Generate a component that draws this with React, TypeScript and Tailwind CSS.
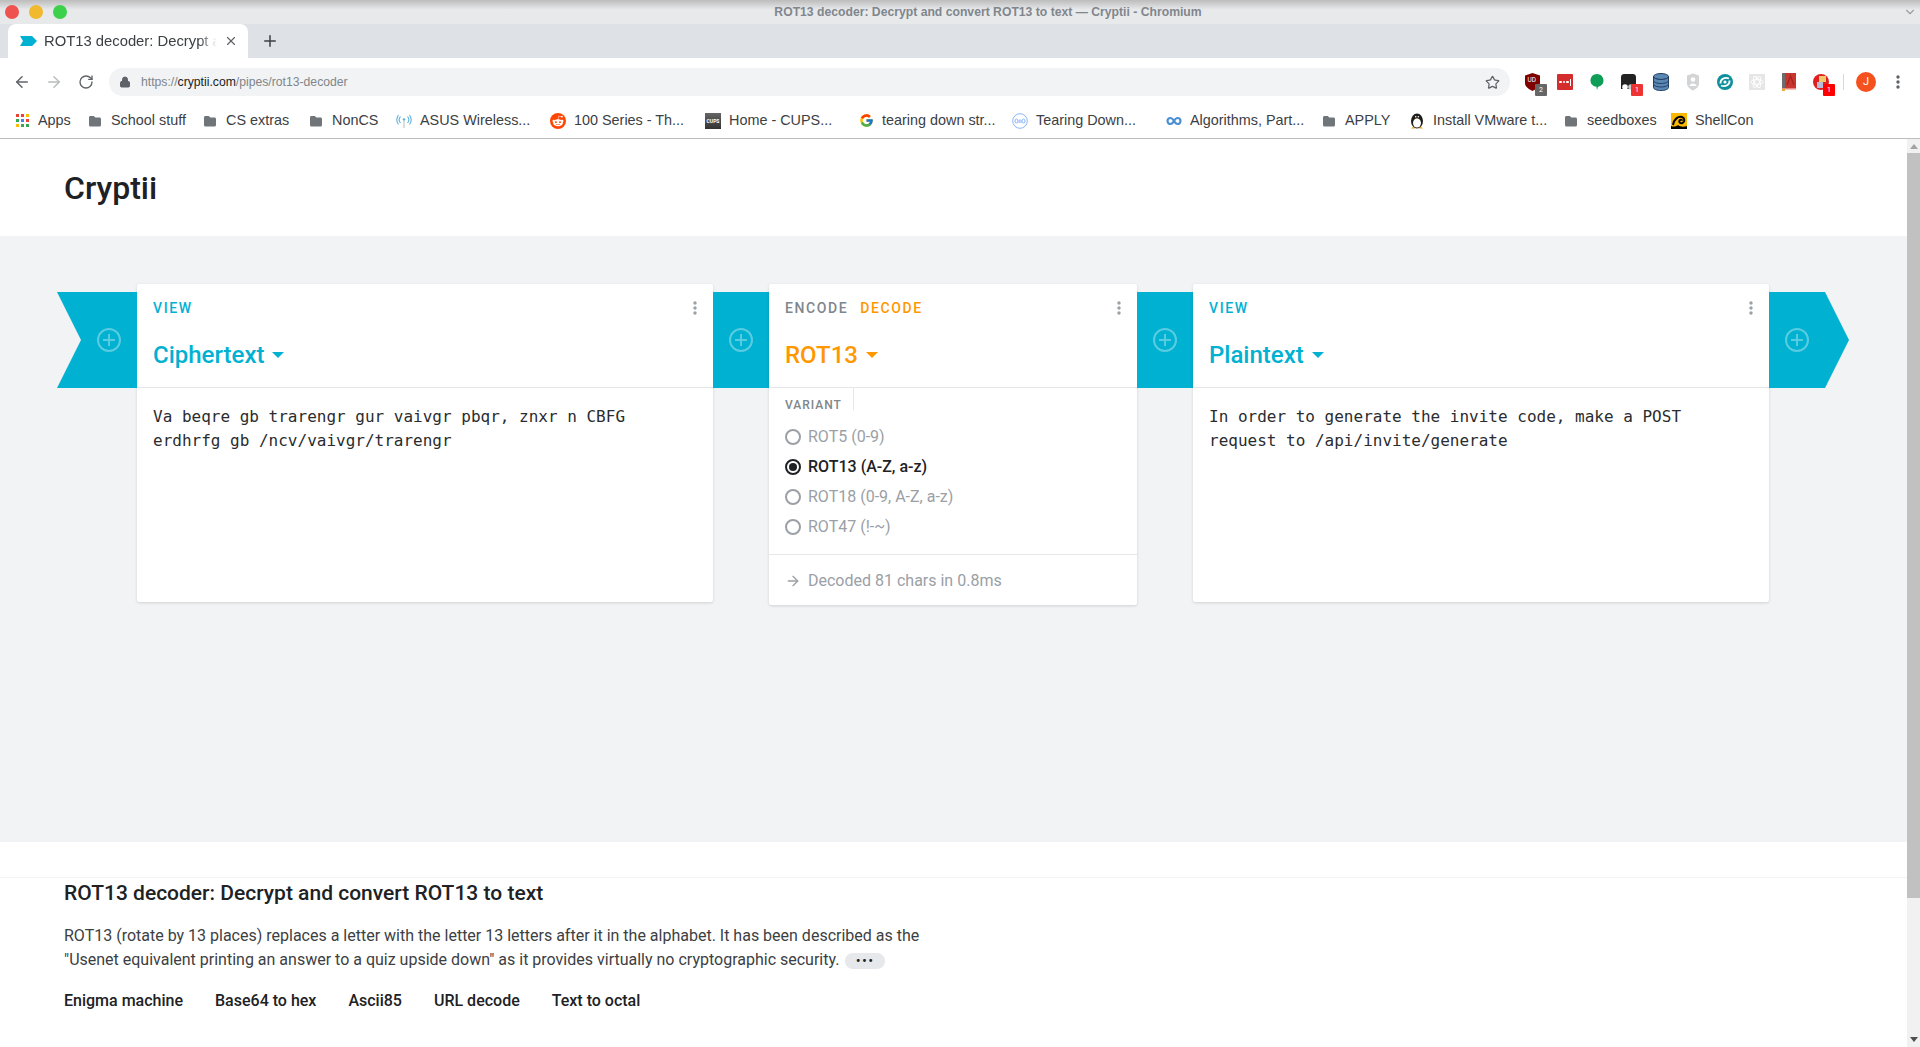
import { ArrowLeft, ArrowRight, RotateCw, Lock, Star, Plus, X, ChevronDown } from "lucide-react";
import { FcGoogle } from "react-icons/fc";
import { FaRedditAlien } from "react-icons/fa";

const roboto = "font-['Roboto',sans-serif]";
const arial = "font-['Liberation_Sans',sans-serif]";

function FolderIcon() {
  return (
    <svg width="16" height="16" viewBox="0 0 16 16" className="shrink-0">
      <path d="M2 4.5C2 3.7 2.6 3 3.4 3h3.4L8.300 4.500h4.300c.8 0 1.400.7 1.400 1.500v6c0 .8-.6 1.500-1.400 1.500H3.400C2.600 13.500 2 12.800 2 12z" fill="#70757a" />
    </svg>
  );
}

function AppsIcon() {
  const colors = ["#ea4335", "#ea4335", "#fbbc04", "#34a853", "#4285f4", "#ea4335", "#fbbc04", "#34a853", "#34a853"];
  return (
    <div className="grid grid-cols-3 gap-[2px] w-[13px] shrink-0">
      {colors.map((c, i) => (
        <div key={i} className="w-[3px] h-[3px]" style={{ background: c }} />
      ))}
    </div>
  );
}

function WifiIcon() {
  return (
    <svg width="16" height="16" viewBox="0 0 16 16" fill="none" stroke="#5fb2df" strokeWidth="1.100">
      <path d="M4.500 3.500a5 5 0 0 0 0 6.500M11.500 3.500a5 5 0 0 1 0 6.500M2.500 2a8 8 0 0 0 0 9.500M13.500 2a8 8 0 0 1 0 9.500" />
      <circle cx="8" cy="6.500" r="1.300" fill="#5fb2df" stroke="none" />
      <path d="M8 7.500V15" stroke="#b9c4cc" />
    </svg>
  );
}

function OnoIcon() {
  return (
    <svg width="16" height="16" viewBox="0 0 16 16" fill="none" stroke="#8ab4f8" strokeWidth="1">
      <circle cx="8" cy="8" r="7.300" />
      <ellipse cx="4.500" cy="8" rx="1.500" ry="2" />
      <path d="M7.200 10V7.500c0-.9 1.800-.9 1.800 0V10" />
      <ellipse cx="11.500" cy="8" rx="1.500" ry="2" />
    </svg>
  );
}

function InfinityIcon() {
  return (
    <svg width="16" height="16" viewBox="0 0 16 16" fill="none" stroke="#4a8fd4" strokeWidth="2.200">
      <path d="M8 8c-1-1.800-2-3-3.700-3C2.900 5 1.500 6.300 1.500 8s1.400 3 2.800 3C6 11 7 9.800 8 8s2-3 3.700-3c1.400 0 2.800 1.300 2.800 3s-1.400 3-2.800 3C10 11 9 9.800 8 8z" />
    </svg>
  );
}

function PenguinIcon() {
  return (
    <svg width="16" height="16" viewBox="0 0 16 16">
      <ellipse cx="8" cy="8" rx="6" ry="7.500" fill="#1c1c1c" />
      <ellipse cx="8" cy="10" rx="4" ry="4.500" fill="#ffffff" />
      <circle cx="6.700" cy="3.800" r=".8" fill="#ffffff" />
      <circle cx="9.300" cy="3.800" r=".8" fill="#ffffff" />
      <path d="M6.800 5h2.400L8 6.300z" fill="#e8a320" />
      <path d="M2 15.500l2.500-2 1.500 2zM14 15.500l-2.500-2-1.500 2z" fill="#e8a320" />
    </svg>
  );
}

function ShellIcon() {
  return (
    <svg width="16" height="16" viewBox="0 0 16 16">
      <rect width="16" height="16" fill="#fbb800" />
      <path d="M0 16v-3c3 1 5 .5 7-1 2 2 6 2 9 1v3z" fill="#000000" />
      <path d="M2 12C3 6 7 3 11 4c3 1 3 5 .5 6-2 .8-4-.5-3-2.500 .7-1.200 2.500-1 2.500.2" fill="none" stroke="#000000" strokeWidth="2" />
    </svg>
  );
}

function Bookmark({ icon, label, width }: { icon: React.ReactNode; label: string; width: string }) {
  return (
    <div className={`flex items-center gap-[8px] shrink-0 ${width}`}>
      <div className="w-[16px] h-[16px] flex items-center justify-center shrink-0">{icon}</div>
      <span className={`text-[14.400px] text-[#3c4043] whitespace-nowrap ${arial}`}>{label}</span>
    </div>
  );
}

function Badge({ text, color }: { text: string; color: string }) {
  return (
    <span className={`absolute -right-[6px] -bottom-[5px] w-[12px] h-[12px] rounded-[1px] text-white text-[7px] leading-[12px] text-center ${color}`}>
      {text}
    </span>
  );
}

function Extensions() {
  return (
    <div className="flex items-center gap-[16px]">
      <div className="relative w-[16px] h-[18px]">
        <svg width="15" height="18" viewBox="0 0 15 18">
          <path d="M0 2.500L7.500 0 15 2.500V10c0 4-4 6-7.500 8C4 16 0 14 0 10z" fill="#800000" />
          <text x="2.500" y="9" fontSize="6.500" fill="#ffffff" fontFamily="Roboto, sans-serif">UD</text>
        </svg>
        <Badge text="2" color="bg-[#666666]" />
      </div>
      <div className="w-[16px] h-[16px] bg-[#d32d2d] rounded-[1px] flex items-center justify-center gap-[1px]">
        <span className="w-[2.500px] h-[2.500px] bg-white rounded-full" />
        <span className="w-[2.500px] h-[2.500px] bg-white rounded-full" />
        <span className="w-[2.500px] h-[2.500px] bg-white rounded-full" />
        <span className="w-[1px] h-[7px] bg-white" />
      </div>
      <svg width="16" height="18" viewBox="0 0 16 18">
        <path d="M8 1c3.600 0 6.500 2.800 6.500 6.500 0 3.500-2.500 5.800-5.500 6.300L8 17l-.5-3.200C4 13.500 1.500 11 1.500 7.500 1.500 3.800 4.400 1 8 1z" fill="#0f9d58" />
      </svg>
      <div className="relative w-[16px] h-[18px]">
        <svg width="15" height="18" viewBox="0 0 15 18">
          <path d="M0 4c0-2 1.500-3 3-3h9c1.500 0 3 1 3 3v12H0z" fill="#222222" />
          <circle cx="4" cy="14" r="2.800" fill="#ffffff" />
          <circle cx="10" cy="14" r="2.800" fill="#cccccc" />
        </svg>
        <Badge text="1" color="bg-[#ee3333]" />
      </div>
      <svg width="16" height="18" viewBox="0 0 16 18">
        <ellipse cx="8" cy="3.500" rx="7.500" ry="3" fill="#5b87b5" stroke="#233f63" />
        <path d="M.5 3.500v11c0 1.700 3.400 3 7.500 3s7.500-1.300 7.500-3v-11c0 1.700-3.400 3-7.500 3s-7.500-1.300-7.500-3z" fill="#5b87b5" stroke="#233f63" />
        <path d="M.5 7.500c0 1.700 3.400 3 7.500 3s7.500-1.300 7.500-3M.5 11c0 1.700 3.400 3 7.500 3s7.500-1.300 7.500-3" fill="none" stroke="#233f63" />
      </svg>
      <svg width="16" height="18" viewBox="0 0 16 18">
        <path d="M2 2.500L8 .5l6 2V10c0 4-3 6-6 7.500C5 16 2 14 2 10z" fill="#d2d4d6" />
        <circle cx="8" cy="6.500" r="2.300" fill="#ffffff" />
        <path d="M4.500 13c0-3.500 7-3.500 7 0z" fill="#ffffff" />
      </svg>
      <svg width="16" height="16" viewBox="0 0 16 16">
        <circle cx="8" cy="8" r="8" fill="#0e8f9c" />
        <path d="M3.500 9.500C3 5.500 7.500 2.500 12 4.500M12.500 6.500c.5 4-4 7-8.500 5" stroke="#ffffff" strokeWidth="1.800" fill="none" />
        <circle cx="8" cy="8" r="1.600" fill="#ffffff" />
      </svg>
      <svg width="16" height="16" viewBox="0 0 16 16" fill="none" stroke="#ffffff" strokeWidth=".9">
        <rect width="16" height="16" fill="#e6e6e6" stroke="none" />
        <ellipse cx="8" cy="8" rx="6" ry="2.500" />
        <ellipse cx="8" cy="8" rx="6" ry="2.500" transform="rotate(60 8 8)" />
        <ellipse cx="8" cy="8" rx="6" ry="2.500" transform="rotate(120 8 8)" />
      </svg>
      <svg width="16" height="18" viewBox="0 0 16 18">
        <rect x="1" y="0" width="14" height="15" fill="#c9352f" />
        <rect x="1" y="0" width="3" height="16" fill="#6d6d6d" />
        <path d="M6 12l3.500-9L13 12" fill="none" stroke="#a02620" strokeWidth="1.300" />
        <rect x="1" y="15" width="14" height="1.500" fill="#e88a80" />
        <rect x="1" y="16" width="3" height="2" fill="#e0b030" />
      </svg>
      <div className="relative w-[16px] h-[18px]">
        <svg width="16" height="18" viewBox="0 0 16 18">
          <circle cx="8" cy="9" r="8" fill="#e02020" />
          <rect x="6" y="3" width="7" height="6" fill="#f0c96a" />
          <rect x="4" y="9" width="6" height="6" fill="#b9bcd6" />
        </svg>
        <Badge text="1" color="bg-[#ff0000]" />
      </div>
    </div>
  );
}

function ChromeBar() {
  return (
    <div className={`w-full ${roboto}`}>
      <div className="h-[24px] bg-gradient-to-b from-[#bcbcbc] to-[#e8e9eb] to-[40%] flex items-center relative">
        <div className="flex items-center gap-[10px] pl-[5px]">
          <span className="w-[14px] h-[14px] rounded-full bg-[#ef5350]" />
          <span className="w-[14px] h-[14px] rounded-full bg-[#f0b92e]" />
          <span className="w-[14px] h-[14px] rounded-full bg-[#3bd14a]" />
        </div>
        <div className={`flex-1 text-center text-[12.200px] font-bold text-[#80868b] pl-[6px] ${arial}`}>
          ROT13 decoder: Decrypt and convert ROT13 to text — Cryptii - Chromium
        </div>
        <ChevronDown size={14} className="text-[#9aa0a6] mr-[3px]" />
      </div>
      <div className="h-[34px] bg-[#dee1e6] flex items-end pl-[8px]">
        <div className="w-[240px] h-[34px] bg-white rounded-t-[8px] flex items-center pl-[12px] pr-[10px] gap-[7px]">
          <svg width="17" height="10" viewBox="0 0 17 10" className="shrink-0"><path d="M0 0h12l5 5-5 5H0l3-5z" fill="#00b1d2" /></svg>
          <span className={`flex-1 overflow-hidden whitespace-nowrap text-[14.800px] text-[#3c4043] [mask-image:linear-gradient(to_right,black_90%,transparent)] ${arial}`}>
            ROT13 decoder: Decrypt a
          </span>
          <X size={14} className="text-[#5f6368] shrink-0" />
        </div>
        <Plus size={18} strokeWidth={2} className="text-[#3c4043] ml-[13px] mb-[8px]" />
      </div>
      <div className="h-[48px] bg-white flex items-center pl-[13px]">
        <ArrowLeft size={18} className="text-[#5f6368]" />
        <ArrowRight size={18} className="text-[#babcbe] ml-[14px]" />
        <RotateCw size={16} className="text-[#5f6368] ml-[15px]" />
        <div className="ml-[15px] w-[1401px] h-[28px] bg-[#f1f3f4] rounded-full flex items-center pl-[10px] pr-[10px]">
          <Lock size={12} className="text-[#5f6368]" fill="#5f6368" />
          <span className={`ml-[10px] text-[12.200px] text-[#80868b] flex-1 whitespace-nowrap ${arial}`}>
            https://<span className="text-[#202124]">cryptii.com</span>/pipes/rot13-decoder
          </span>
          <Star size={15} className="text-[#5f6368]" />
        </div>
        <div className="ml-[15px]"><Extensions /></div>
        <div className="w-px h-[16px] bg-[#d5d7da] ml-[14px]" />
        <div className="ml-[12px] w-[20px] h-[20px] rounded-full bg-[#f4511e] text-white text-[11px] flex items-center justify-center">J</div>
        <div className="ml-[20px]"><Dots color="#5f6368" /></div>
      </div>
      <div className="h-[33px] bg-white border-b border-[#bdbdbd] flex items-center pl-[14px] pb-[2px]">
        <Bookmark width="w-[73px]" icon={<AppsIcon />} label="Apps" />
        <Bookmark width="w-[115px]" icon={<FolderIcon />} label="School stuff" />
        <Bookmark width="w-[106px]" icon={<FolderIcon />} label="CS extras" />
        <Bookmark width="w-[88px]" icon={<FolderIcon />} label="NonCS" />
        <Bookmark width="w-[154px]" icon={<WifiIcon />} label="ASUS Wireless..." />
        <Bookmark width="w-[155px]" icon={<span className="w-[16px] h-[16px] rounded-full bg-[#ff4500] flex items-center justify-center"><FaRedditAlien size={12} color="#ffffff" /></span>} label="100 Series - Th..." />
        <Bookmark width="w-[153px]" icon={<span className="w-[16px] h-[16px] bg-gradient-to-b from-[#666666] to-[#333333] text-white text-[5px] font-bold text-center leading-[16px]">CUPS</span>} label="Home - CUPS..." />
        <Bookmark width="w-[154px]" icon={<FcGoogle size={15} />} label="tearing down str..." />
        <Bookmark width="w-[154px]" icon={<OnoIcon />} label="Tearing Down..." />
        <Bookmark width="w-[155px]" icon={<InfinityIcon />} label="Algorithms, Part..." />
        <Bookmark width="w-[88px]" icon={<FolderIcon />} label="APPLY" />
        <Bookmark width="w-[154px]" icon={<PenguinIcon />} label="Install VMware t..." />
        <Bookmark width="w-[108px]" icon={<FolderIcon />} label="seedboxes" />
        <Bookmark width="w-[90px]" icon={<ShellIcon />} label="ShellCon" />
      </div>
    </div>
  );
}

function PlusCircle() {
  return (
    <svg width="24" height="24" viewBox="0 0 24 24" fill="none" stroke="#ffffff" strokeOpacity="0.35" strokeWidth="2">
      <circle cx="12" cy="12" r="11" />
      <path d="M12 6v12M6 12h12" />
    </svg>
  );
}

function Ribbon({ className }: { className: string }) {
  return (
    <div className={`h-[96px] mt-[8px] bg-[#00b1d2] flex items-center shrink-0 ${className}`}>
      <PlusCircle />
    </div>
  );
}

function Dots({ color = "#9aa0a6" }: { color?: string }) {
  return (
    <svg width="4" height="14" viewBox="0 0 4 14" className="block" fill={color}>
      <circle cx="2" cy="2" r="1.700" />
      <circle cx="2" cy="7" r="1.700" />
      <circle cx="2" cy="12" r="1.700" />
    </svg>
  );
}

function CardHead({ actions, title, tone }: { actions: React.ReactNode; title: string; tone: string }) {
  return (
    <div className="h-[104px] border-b border-[#e6e7e9] px-[16px] relative">
      <div className="pt-[14px] h-[45px] text-[14px] font-medium tracking-[1.600px] flex gap-[12px]">{actions}</div>
      <div className={`flex items-center gap-[8px] text-[24px] font-medium leading-[32px] mt-[10px] ${tone}`}>
        {title}
        <span className="w-0 h-0 border-x-[6px] border-x-transparent border-t-[6px] border-t-current" />
      </div>
      <div className="absolute right-[16px] top-[17px]"><Dots /></div>
    </div>
  );
}

function TextCard({ title, text, width }: { title: string; text: string; width: string }) {
  return (
    <div className={`h-[318px] bg-white rounded-[2px] shadow-[0_1px_3px_rgba(0,0,0,0.14)] shrink-0 ${width}`}>
      <CardHead actions={<span className="text-[#00b1d2]">VIEW</span>} title={title} tone="text-[#00b1d2]" />
      <div className="px-[16px] pt-[17px] text-[16px] leading-[24px] text-[#2a2c2f] font-['DejaVu_Sans_Mono',monospace]">{text}</div>
    </div>
  );
}

function Radio({ label, checked }: { label: string; checked?: boolean }) {
  return (
    <div className={`h-[30px] flex items-center gap-[7px] text-[16px] ${checked ? "text-[#202124] font-medium" : "text-[#9aa0a6]"}`}>
      <span className={`w-[16px] h-[16px] rounded-full border-2 flex items-center justify-center ${checked ? "border-[#202124]" : "border-[#9aa0a6]"}`}>
        {checked && <span className="w-[8px] h-[8px] rounded-full bg-[#202124]" />}
      </span>
      {label}
    </div>
  );
}

function RotCard() {
  return (
    <div className="w-[368px] h-[321px] bg-white rounded-[2px] shadow-[0_1px_3px_rgba(0,0,0,0.14)] shrink-0">
      <CardHead
        actions={<><span className="text-[#80868b]">ENCODE</span><span className="text-[#ff9800]">DECODE</span></>}
        title="ROT13"
        tone="text-[#ff9800]"
      />
      <div className="h-[167px] border-b border-[#e6e7e9] px-[16px]">
        <div className="h-[22px] w-[69px] border-r border-[#e6e7e9] pt-[9px] text-[12px] leading-[16px] font-medium tracking-[1px] text-[#80868b]">VARIANT</div>
        <div className="pt-[12px]">
          <Radio label="ROT5 (0-9)" />
          <Radio label="ROT13 (A-Z, a-z)" checked />
          <Radio label="ROT18 (0-9, A-Z, a-z)" />
          <Radio label="ROT47 (!-~)" />
        </div>
      </div>
      <div className="h-[50px] px-[16px] pt-[1px] flex items-center gap-[7px] text-[16px] text-[#9aa0a6]">
        <ArrowRight size={16} className="text-[#9aa0a6]" />
        Decoded 81 chars in 0.8ms
      </div>
    </div>
  );
}

export default function App() {
  return (
    <div className={`h-[1047px] w-full overflow-hidden flex flex-col bg-white ${roboto}`}>
      <ChromeBar />
      <div className="flex flex-1 min-h-0">
        <div className="flex-1 min-w-0 flex flex-col">
          <div className="h-[97px] flex items-center pl-[64px] shrink-0">
            <h1 className="text-[32px] font-medium text-[#202124]">Cryptii</h1>
          </div>
          <div className="h-[606px] bg-[#f1f3f5] pt-[48px] pl-[57px] flex items-start shrink-0">
            <Ribbon className="w-[80px] pl-[40px] [clip-path:polygon(0_0,100%_0,100%_100%,0_100%,24px_50%)]" />
            <TextCard width="w-[576px]" title="Ciphertext" text="Va beqre gb trarengr gur vaivgr pbqr, znxr n CBFG erdhrfg gb /ncv/vaivgr/trarengr" />
            <Ribbon className="w-[56px] justify-center" />
            <RotCard />
            <Ribbon className="w-[56px] justify-center" />
            <TextCard width="w-[576px]" title="Plaintext" text="In order to generate the invite code, make a POST request to /api/invite/generate" />
            <Ribbon className="w-[80px] pl-[16px] [clip-path:polygon(0_0,56px_0,100%_50%,56px_100%,0_100%)]" />
          </div>
          <div className="flex-1 pl-[64px] pt-[36px] relative text-[#202124]">
            <div className="absolute left-0 right-0 top-[35px] h-px bg-[#f1f3f5]" />
            <h2 className="text-[21px] leading-[30px] font-medium">ROT13 decoder: Decrypt and convert ROT13 to text</h2>
            <p className="mt-[16px] w-[900px] text-[16px] leading-[24px] text-[#3c4043]">
              ROT13 (rotate by 13 places) replaces a letter with the letter 13 letters after it in the alphabet. It has been described as the "Usenet equivalent printing an answer to a quiz upside down" as it provides virtually no cryptographic security.
              <span className="ml-[6px] inline-flex items-center justify-center align-middle w-[40px] h-[16px] rounded-full bg-[#e6e8eb] text-[#202124] text-[12px] leading-[16px] font-bold tracking-[2px]">•••</span>
            </p>
            <div className="mt-[17px] flex gap-[32px] text-[16px] font-medium">
              <span>Enigma machine</span>
              <span>Base64 to hex</span>
              <span>Ascii85</span>
              <span>URL decode</span>
              <span>Text to octal</span>
            </div>
          </div>
        </div>
        <div className="w-[13px] bg-[#f1f1f1] flex flex-col items-center shrink-0">
          <div className="mt-[5px] w-0 h-0 border-x-[4px] border-x-transparent border-b-[5px] border-b-[#a3a3a3]" />
          <div className="mt-[4px] w-full h-[745px] bg-[#c1c1c1]" />
          <div className="mt-auto mb-[5px] w-0 h-0 border-x-[4px] border-x-transparent border-t-[5px] border-t-[#505050]" />
        </div>
      </div>
    </div>
  );
}
